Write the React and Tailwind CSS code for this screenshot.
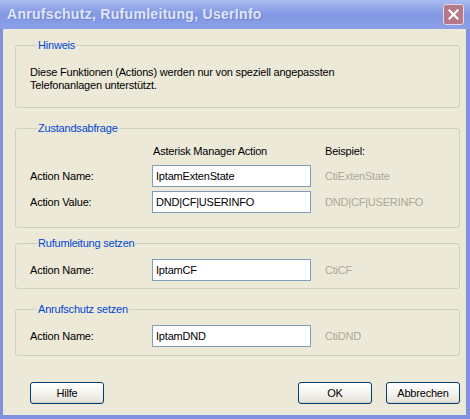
import React from "react";

const font = { fontFamily: '"Liberation Sans", Arial, sans-serif' };

function Group({ title, className = "", children }) {
  return (
    <fieldset className={`border border-[#d0d0bf] rounded-[3px] ${className}`}>
      <legend className="ml-[7px] px-[1px] text-[#0046d5] text-[11px] leading-[13px]">{title}</legend>
      {children}
    </fieldset>
  );
}

function Field({ value }) {
  return (
    <div className="w-[159px] h-[22px] border border-[#7f9db9] bg-white flex items-center px-[3px] text-[11px] text-black">
      {value}
    </div>
  );
}

function Row({ label, value, example }) {
  return (
    <div className="flex items-center">
      <div className="w-[122px] text-[11px] text-black">{label}</div>
      <Field value={value} />
      <div className="ml-[14px] text-[11px] text-[#aca899]">{example}</div>
    </div>
  );
}

function XpButton({ children }) {
  return (
    <button className="w-[74px] h-[22px] rounded-[3px] border border-[#003c74] bg-gradient-to-b from-white via-[#f4f3ee] to-[#e3e1d6] text-[11px] text-black shadow-[inset_0_-1px_0_#d6d0c5]">
      {children}
    </button>
  );
}

export default function App() {
  return (
    <div className="w-[470px] h-[419px] flex flex-col bg-[#7f92e2] overflow-hidden" style={font}>
      {/* title bar */}
      <div className="h-[29px] shrink-0 flex items-center pl-[7px] pr-[6px] bg-gradient-to-b from-[#aabbf0] via-[#8197e2] to-[#8aa0e8]">
        <div className="flex-1 text-[14px] font-bold text-[#dfe5f7] tracking-[0.3px] [text-shadow:1px_1px_0_#7185d0]">
          Anrufschutz, Rufumleitung, UserInfo
        </div>
        <div className="w-[21px] h-[21px] rounded-[3px] border border-[#e8d7dc] bg-[#b57886] flex items-center justify-center">
          <svg width="11" height="11" viewBox="0 0 11 11">
            <path d="M1.5 1.5 L9.5 9.5 M9.5 1.5 L1.5 9.5" stroke="white" strokeWidth="2.2" strokeLinecap="square" />
          </svg>
        </div>
      </div>

      {/* client area */}
      <div className="flex-1 ml-[3px] mr-[4px] mb-[4px] bg-[#ece9d8] flex flex-col pl-[12px] pr-[6px] pt-[10px] tracking-[-0.2px]">
        <Group title="Hinweis" className="px-[14px] pt-[14px] pb-[15px]">
          <p className="text-[11px] leading-[13px] text-black">
            Diese Funktionen (Actions) werden nur von speziell angepassten
            <br />
            Telefonanlagen unterstützt.
          </p>
        </Group>

        <Group title="Zustandsabfrage" className="mt-[14px] px-[14px] pt-[10px] pb-[14px]">
          <div className="flex text-[11px] leading-[13px] text-black">
            <div className="w-[123px]" />
            <div className="w-[172px]">Asterisk Manager Action</div>
            <div>Beispiel:</div>
          </div>
          <div className="mt-[7px] flex flex-col gap-[4px]">
            <Row label="Action Name:" value="IptamExtenState" example="CtiExtenState" />
            <Row label="Action Value:" value="DND|CF|USERINFO" example="DND|CF|USERINFO" />
          </div>
        </Group>

        <Group title="Rufumleitung setzen" className="mt-[9px] px-[14px] pt-[9px] pb-[7px]">
          <Row label="Action Name:" value="IptamCF" example="CtiCF" />
        </Group>

        <Group title="Anrufschutz setzen" className="mt-[14px] px-[14px] pt-[9px] pb-[8px]">
          <Row label="Action Name:" value="IptamDND" example="CtiDND" />
        </Group>

        <div className="mt-[26px] flex items-center pl-[15px] pr-[0px]">
          <XpButton>Hilfe</XpButton>
          <div className="flex-1" />
          <XpButton>OK</XpButton>
          <div className="w-[14px]" />
          <XpButton>Abbrechen</XpButton>
        </div>
      </div>
    </div>
  );
}
